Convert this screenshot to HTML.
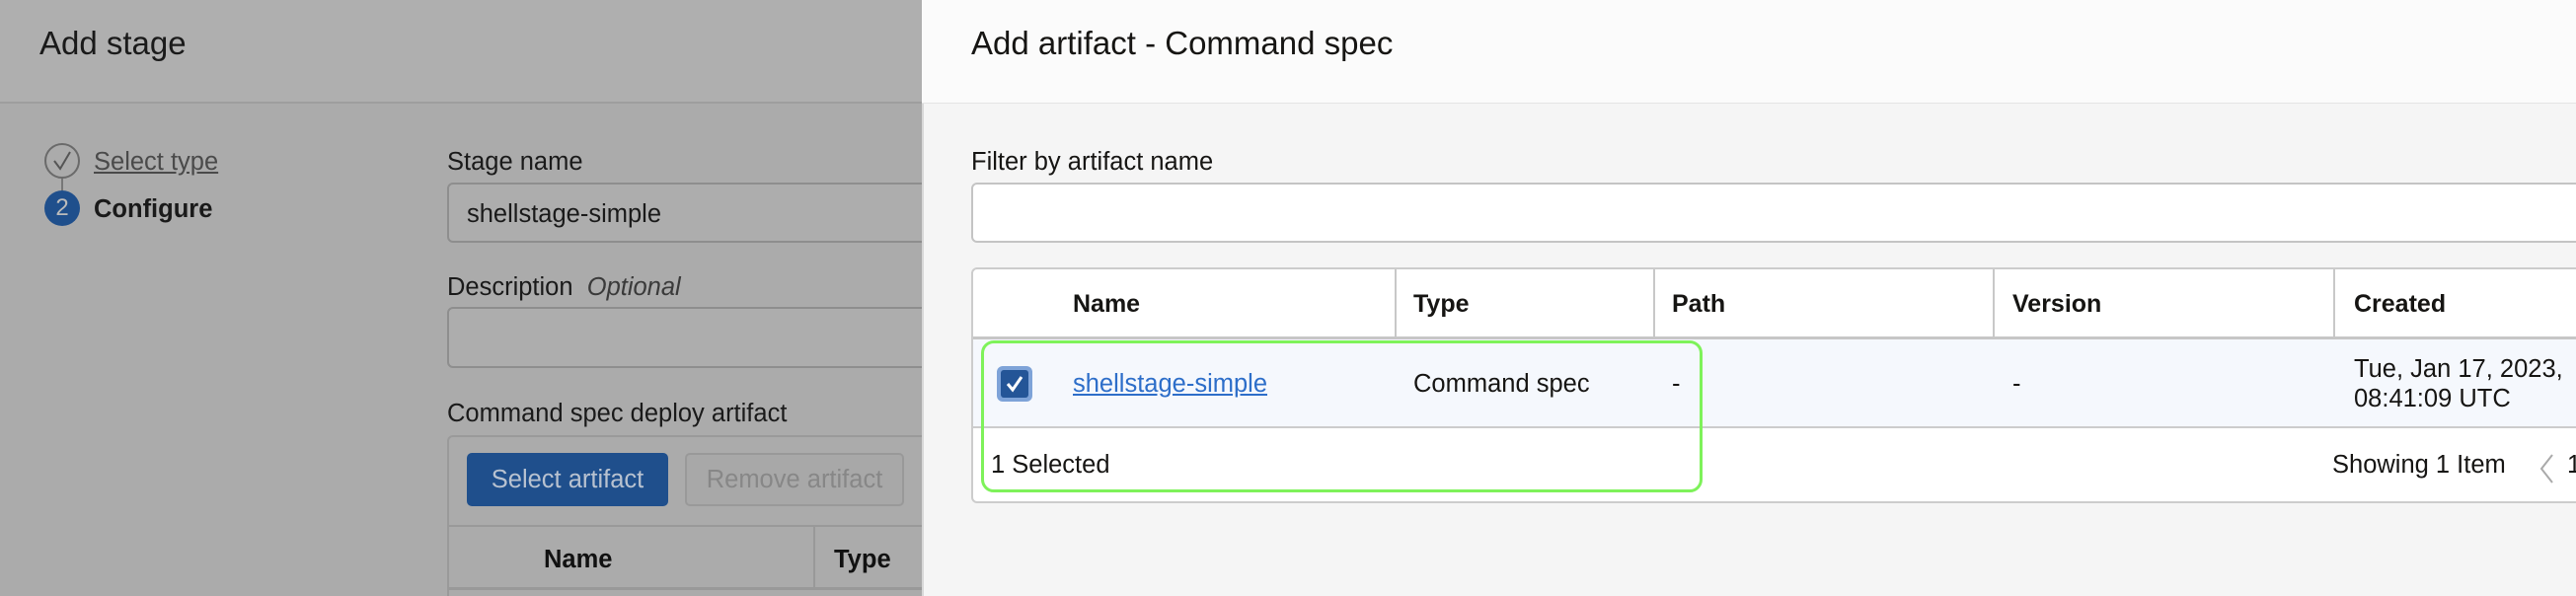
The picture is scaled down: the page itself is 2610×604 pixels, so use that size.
<!DOCTYPE html>
<html style="width:2610px;height:604px;overflow:hidden"><head><meta charset="utf-8"><style>
*{box-sizing:border-box;margin:0;padding:0}
body{width:2610px;height:604px;overflow:hidden;font-family:"Liberation Sans",sans-serif;position:relative;background:#f5f5f5;color:#161513}
.a{position:absolute;white-space:nowrap}
.l{position:absolute;left:0;top:0;width:934px;height:604px;background:#ababab}
.lh{position:absolute;left:0;top:0;width:934px;height:105px;background:#afafaf;border-bottom:2px solid #9e9e9e}
.t25{font-size:25.5px}
.r{position:absolute;left:934px;top:0;width:1676px;height:604px;background:#f5f5f5;border-left:2px solid #d8d8d8}
.rh{position:absolute;left:934px;top:0;width:1676px;height:105px;background:#fbfbfb;border-bottom:1px solid #e4e4e4}
.hdr{font-weight:bold;font-size:25px;color:#161513}
.vs{position:absolute;width:2px;background:#c8c8c8}
</style></head><body>
<div class="l"></div><div class="lh"></div>
<div class="a" style="left:40px;top:25px;font-size:33px;color:#1a1a1a">Add stage</div>
<div class="a" style="left:45px;top:145px;width:36px;height:36px;border:2px solid #6a6a6a;border-radius:50%"></div>
<svg class="a" style="left:45px;top:145px" width="36" height="36"><path d="M10 18 L16 26 L26 9" fill="none" stroke="#555" stroke-width="2"/></svg>
<div class="a" style="left:62px;top:181px;width:2px;height:12px;background:#777"></div>
<div class="a" style="left:45px;top:193px;width:36px;height:36px;background:#1f4f8c;border-radius:50%;color:#bbb;font-size:24px;text-align:center;line-height:36px">2</div>
<div class="a t25" style="left:95px;top:150px;color:#4a4a4a;text-decoration:underline">Select type</div>
<div class="a t25" style="left:95px;top:198px;font-weight:bold;color:#1a1a1a">Configure</div>
<div class="a t25" style="left:453px;top:150px;color:#1a1a1a">Stage name</div>
<div class="a" style="left:453px;top:185px;width:490px;height:61px;border:2px solid #8e8e8e;border-radius:6px;background:#adadad"></div>
<div class="a t25" style="left:473px;top:203px;color:#1a1a1a">shellstage-simple</div>
<div class="a t25" style="left:453px;top:277px;color:#1a1a1a">Description&nbsp;&nbsp;<i style="color:#3a3a3a">Optional</i></div>
<div class="a" style="left:453px;top:311px;width:490px;height:62px;border:2px solid #8e8e8e;border-radius:6px;background:#adadad"></div>
<div class="a t25" style="left:453px;top:405px;color:#1a1a1a">Command spec deploy artifact</div>
<div class="a" style="left:453px;top:441px;width:490px;height:163px;border:2px solid #9a9a9a;border-bottom:none;border-radius:6px 6px 0 0;background:#ababab"></div>
<div class="a t25" style="left:473px;top:459px;width:204px;height:54px;background:#1f4f8c;border-radius:5px;color:#b8c2d0;text-align:center;line-height:54px">Select artifact</div>
<div class="a t25" style="left:694px;top:459px;width:222px;height:54px;background:#a8a8a8;border:2px solid #999;border-radius:5px;color:#878787;text-align:center;line-height:50px">Remove artifact</div>
<div class="a" style="left:454px;top:532px;width:480px;height:2px;background:#999"></div>
<div class="a" style="left:824px;top:534px;width:2px;height:62px;background:#999"></div>
<div class="a" style="left:454px;top:595px;width:480px;height:3px;background:#999"></div>
<div class="a t25" style="left:551px;top:553px;font-weight:bold;color:#111">Name</div>
<div class="a t25" style="left:845px;top:553px;font-weight:bold;color:#111">Type</div>

<div class="r"></div><div class="rh"></div>
<div class="a" style="left:984px;top:25px;font-size:33px">Add artifact - Command spec</div>
<div class="a t25" style="left:984px;top:150px">Filter by artifact name</div>
<div class="a" style="left:984px;top:185px;width:1640px;height:61px;background:#fff;border:2px solid #c4c4c4;border-radius:6px"></div>
<div class="a" style="left:984px;top:271px;width:1640px;height:239px;background:#fff;border:2px solid #ccc;border-radius:6px"></div>
<div class="a" style="left:986px;top:341px;width:1624px;height:93px;background:#f5f8fd;border-top:3px solid #c6c6c6;border-bottom:2px solid #ccc"></div>
<div class="vs" style="left:1413px;top:273px;height:68px"></div>
<div class="vs" style="left:1675px;top:273px;height:68px"></div>
<div class="vs" style="left:2019px;top:273px;height:68px"></div>
<div class="vs" style="left:2364px;top:273px;height:68px"></div>
<div class="a hdr" style="left:1087px;top:294px">Name</div>
<div class="a hdr" style="left:1432px;top:294px">Type</div>
<div class="a hdr" style="left:1694px;top:294px">Path</div>
<div class="a hdr" style="left:2039px;top:294px">Version</div>
<div class="a hdr" style="left:2385px;top:294px">Created</div>
<div class="a" style="left:1010px;top:371px;width:36px;height:36px;background:#7ea3d8;border-radius:6px"></div>
<div class="a" style="left:1014px;top:375px;width:28px;height:28px;background:#245597;border-radius:3px"></div>
<svg class="a" style="left:1014px;top:375px" width="28" height="28"><path d="M7 14 L12 20 L21 7" fill="none" stroke="#fff" stroke-width="3"/></svg>
<div class="a t25" style="left:1087px;top:375px;color:#2d6ec9;text-decoration:underline">shellstage-simple</div>
<div class="a t25" style="left:1432px;top:375px">Command spec</div>
<div class="a t25" style="left:1694px;top:375px">-</div>
<div class="a t25" style="left:2039px;top:375px">-</div>
<div class="a t25" style="left:2385px;top:359px;line-height:30px">Tue, Jan 17, 2023,<br>08:41:09 UTC</div>
<div class="a t25" style="left:1004px;top:457px">1 Selected</div>
<div class="a t25" style="left:2363px;top:457px">Showing 1 Item</div>
<svg class="a" style="left:2570px;top:458px" width="20" height="34"><path d="M16 3 L5 17 L16 31" fill="none" stroke="#aaa" stroke-width="2"/></svg>
<div class="a t25" style="left:2601px;top:457px">1</div>
<div class="a" style="left:994px;top:345px;width:731px;height:154px;border:3px solid #7ef25a;border-radius:13px"></div>
</body></html>
